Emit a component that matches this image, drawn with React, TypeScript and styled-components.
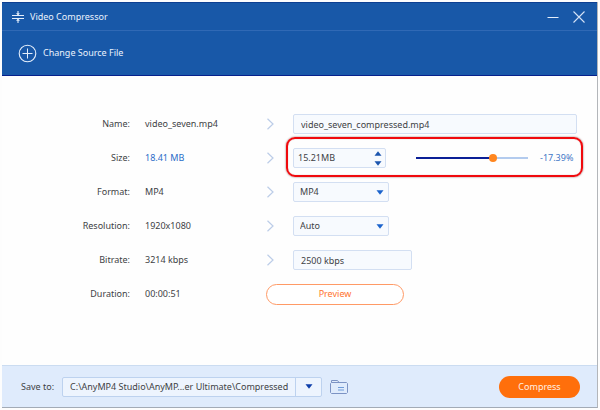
import React, { useState } from "react";
import styled, { createGlobalStyle, css } from "styled-components";

const GlobalStyle = createGlobalStyle`
  * { box-sizing: border-box; }
  body {
    margin: 0;
    background: #fdfdfd;
    color: #404245;
    font: 9px/12px "Noto Sans", "DejaVu Sans Condensed", sans-serif;
  }
  button, input, select { font: inherit; color: inherit; margin: 0; }
  button { cursor: pointer; }
  svg { display: block; flex: none; }
`;

const Window = styled.div`
  display: flex;
  flex-direction: column;
  min-height: calc(100vh - 4px);
  margin: 2px;
  background: #fefefe;
  border-right: 1px solid #b3b6ba;
  border-bottom: 1px solid #a3abb6;
`;

const Header = styled.header`
  background: #1858a8;
  color: #eaf2fd;
  border-top: 1px solid #0d3f92;
  border-bottom: 1px solid #06208c;
`;

const TitleBar = styled.div`
  display: flex;
  align-items: center;
  gap: 6px;
  height: 28px;
  padding: 0 12px 0 10px;
  border-bottom: 1px solid #3069b5;
`;

const Title = styled.h1`
  flex: 1;
  margin: 0;
  font-size: 9px;
  font-weight: 400;
`;

const WindowButton = styled.button`
  display: flex;
  padding: 0;
  margin-left: 8px;
  border: 0;
  background: none;
`;

const Toolbar = styled.div`
  display: flex;
  align-items: center;
  height: 44px;
  padding: 0 16px;
`;

const SourceButton = styled.button`
  display: flex;
  align-items: center;
  gap: 6px;
  padding: 0;
  border: 0;
  background: none;
`;

const Form = styled.main`
  flex: 1;
  padding: 31px 20px 20px 0;
`;

const Row = styled.div`
  display: grid;
  grid-template-columns: 128px 136px 27px minmax(0, 1fr);
  align-items: center;
  height: 34px;
`;

const Label = styled.label`
  text-align: right;
`;

const Original = styled.span<{ $accent?: boolean }>`
  padding-left: 15px;
  color: ${(p) => (p.$accent ? "#2a6cc8" : "inherit")};
`;

const fieldBox = css`
  height: 20px;
  border: 1px solid #d3dff2;
  border-radius: 2px;
  background: #f7fafe;
`;

const TextField = styled.input<{ $width?: string }>`
  ${fieldBox}
  width: ${(p) => p.$width ?? "100%"};
  padding: 0 7px;
`;

const SelectBox = styled.div`
  display: grid;
  align-items: center;
  width: 96px;
  > * { grid-area: 1 / 1; }
  > svg { justify-self: end; margin-right: 5px; pointer-events: none; }
`;

const Select = styled.select`
  ${fieldBox}
  appearance: none;
  width: 100%;
  padding: 0 16px 0 6px;
`;

const SizeControls = styled.div`
  position: relative;
  display: flex;
  align-items: center;
  &::after {
    content: "";
    position: absolute;
    inset: -11px -6px -9px -7px;
    border: 2px solid #f0090d;
    border-radius: 9px;
    box-shadow: 0 0 2px #8f6060, inset 0 0 1px #c88;
    pointer-events: none;
  }
`;

const Spinner = styled.div`
  ${fieldBox}
  display: flex;
  align-items: center;
  width: 93px;
  padding-right: 3px;
`;

const SpinnerInput = styled.input`
  flex: 1;
  min-width: 0;
  padding: 0 4px;
  border: 0;
  background: none;
`;

const Steps = styled.div`
  display: flex;
  flex-direction: column;
  gap: 5px;
`;

const StepButton = styled.button`
  display: flex;
  padding: 0;
  border: 0;
  background: none;
`;

const Slider = styled.input`
  appearance: none;
  flex: 1;
  min-width: 0;
  height: 8px;
  margin: 0 12px 0 30px;
  background: none;
  &::-webkit-slider-runnable-track {
    height: 2px;
    background: linear-gradient(to right, #0b1f96 68%, #b3cbee 68%);
  }
  &::-webkit-slider-thumb {
    appearance: none;
    width: 8px;
    height: 8px;
    margin-top: -3px;
    border-radius: 50%;
    background: #ff861f;
  }
`;

const Percent = styled.output`
  width: 37px;
  color: #4276c6;
`;

const PreviewButton = styled.button`
  grid-column: 3 / -1;
  justify-self: start;
  width: 138px;
  height: 21px;
  padding: 0;
  border: 1px solid #ff9a66;
  border-radius: 11px;
  background: #fff;
  color: #ff7430;
`;

const Footer = styled.footer`
  display: flex;
  align-items: center;
  height: 42px;
  padding: 0 17px 0 19px;
  border-top: 1px solid #cbdcf1;
  background: #dfebfc;
`;

const PathBox = styled.div`
  display: flex;
  width: 260px;
  height: 20px;
  margin: 0 8px;
  border: 1px solid #bdd2ef;
  border-radius: 2px;
  background: #edf4fe;
`;

const PathInput = styled.input`
  flex: 1;
  min-width: 0;
  padding: 0 7px;
  border: 0;
  background: none;
`;

const PathMenuButton = styled.button`
  display: grid;
  place-items: center;
  width: 26px;
  padding: 0;
  border: 0;
  border-left: 1px solid #bdd2ef;
  background: none;
`;

const FolderButton = styled.button`
  display: flex;
  padding: 0;
  border: 0;
  background: none;
`;

const CompressButton = styled.button`
  width: 81px;
  height: 22px;
  margin-left: auto;
  padding: 0;
  border: 0;
  border-radius: 11px;
  background: #ff6f0b;
  color: #fff0e3;
`;

const Arrow = ({ up = false, color = "#1b63cc" }) => (
  <svg width="8" height="5" viewBox="0 0 8 5" aria-hidden="true">
    <path d={up ? "M4 0.3 7.5 4.8H.5Z" : "M.5 .3h7L4 4.8Z"} fill={color} />
  </svg>
);

const Chevron = () => (
  <svg width="8" height="12" viewBox="0 0 8 12" fill="none" stroke="#bccde8" strokeWidth="1.2" aria-hidden="true">
    <path d="M1.5 .8 7 6 1.5 11.2" />
  </svg>
);

export default function App() {
  const [name, setName] = useState("video_seven_compressed.mp4");
  const [size, setSize] = useState("15.21MB");
  const [ratio, setRatio] = useState(70);
  const [bitrate, setBitrate] = useState("2500 kbps");
  const [path, setPath] = useState("C:\\AnyMP4 Studio\\AnyMP...er Ultimate\\Compressed");

  return (
    <>
      <GlobalStyle />
      <Window>
        <Header>
          <TitleBar>
            <svg width="12" height="12" viewBox="0 0 12 12" stroke="#e4eefb" fill="none" aria-hidden="true">
              <path d="M0 4.5h12M0 7.5h12M6 0v4M6 8v4" strokeWidth="1.1" />
              <path d="M4 2.2h4L6 4.3ZM4 9.8h4L6 7.7Z" fill="#e4eefb" stroke="none" />
            </svg>
            <Title>Video Compressor</Title>
            <WindowButton aria-label="Minimize">
              <svg width="12" height="12" viewBox="0 0 12 12" stroke="#e4eefb">
                <path d="M.5 6.5h11" />
              </svg>
            </WindowButton>
            <WindowButton aria-label="Close">
              <svg width="12" height="12" viewBox="0 0 12 12" stroke="#d4e2f6" strokeWidth="1.1">
                <path d="M.5 .5l11 11M11.5 .5l-11 11" />
              </svg>
            </WindowButton>
          </TitleBar>
          <Toolbar>
            <SourceButton>
              <svg width="19" height="19" viewBox="0 0 19 19" fill="none" stroke="#e4eefb" aria-hidden="true">
                <circle cx="9.5" cy="9.5" r="8.3" strokeWidth="1.1" />
                <path d="M9.5 4.5v10M4.5 9.5h10" />
              </svg>
              Change Source File
            </SourceButton>
          </Toolbar>
        </Header>

        <Form>
          <Row>
            <Label htmlFor="name">Name:</Label>
            <Original>video_seven.mp4</Original>
            <Chevron />
            <TextField id="name" value={name} onChange={(e) => setName(e.target.value)} />
          </Row>
          <Row>
            <Label htmlFor="size">Size:</Label>
            <Original $accent>18.41 MB</Original>
            <Chevron />
            <SizeControls>
              <Spinner>
                <SpinnerInput id="size" value={size} onChange={(e) => setSize(e.target.value)} />
                <Steps>
                  <StepButton aria-label="Increase size"><Arrow up color="#1b55ae" /></StepButton>
                  <StepButton aria-label="Decrease size"><Arrow color="#1b55ae" /></StepButton>
                </Steps>
              </Spinner>
              <Slider
                type="range"
                aria-label="Compression ratio"
                value={ratio}
                onChange={(e) => setRatio(Number(e.target.value))}
              />
              <Percent>-17.39%</Percent>
            </SizeControls>
          </Row>
          <Row>
            <Label htmlFor="format">Format:</Label>
            <Original>MP4</Original>
            <Chevron />
            <SelectBox>
              <Select id="format"><option>MP4</option></Select>
              <Arrow />
            </SelectBox>
          </Row>
          <Row>
            <Label htmlFor="resolution">Resolution:</Label>
            <Original>1920x1080</Original>
            <Chevron />
            <SelectBox>
              <Select id="resolution"><option>Auto</option></Select>
              <Arrow />
            </SelectBox>
          </Row>
          <Row>
            <Label htmlFor="bitrate">Bitrate:</Label>
            <Original>3214 kbps</Original>
            <Chevron />
            <TextField id="bitrate" $width="119px" value={bitrate} onChange={(e) => setBitrate(e.target.value)} />
          </Row>
          <Row>
            <Label as="span">Duration:</Label>
            <Original>00:00:51</Original>
            <PreviewButton>Preview</PreviewButton>
          </Row>
        </Form>

        <Footer>
          <label htmlFor="path">Save to:</label>
          <PathBox>
            <PathInput id="path" value={path} onChange={(e) => setPath(e.target.value)} />
            <PathMenuButton aria-label="Choose folder"><Arrow color="#0d3eaa" /></PathMenuButton>
          </PathBox>
          <FolderButton aria-label="Open folder">
            <svg width="18" height="14" viewBox="0 0 18 14" fill="none" stroke="#7c93c4">
              <path d="M1.5 13.5h15l1-1v-9l-1-1h-15l-1 1v9Z" />
              <path d="M1.5 2.500V.5h6l1.500 2" />
              <path d="M8 7.500h6M8 10h6" stroke="#6f9bd8" />
            </svg>
          </FolderButton>
          <CompressButton>Compress</CompressButton>
        </Footer>
      </Window>
    </>
  );
}
